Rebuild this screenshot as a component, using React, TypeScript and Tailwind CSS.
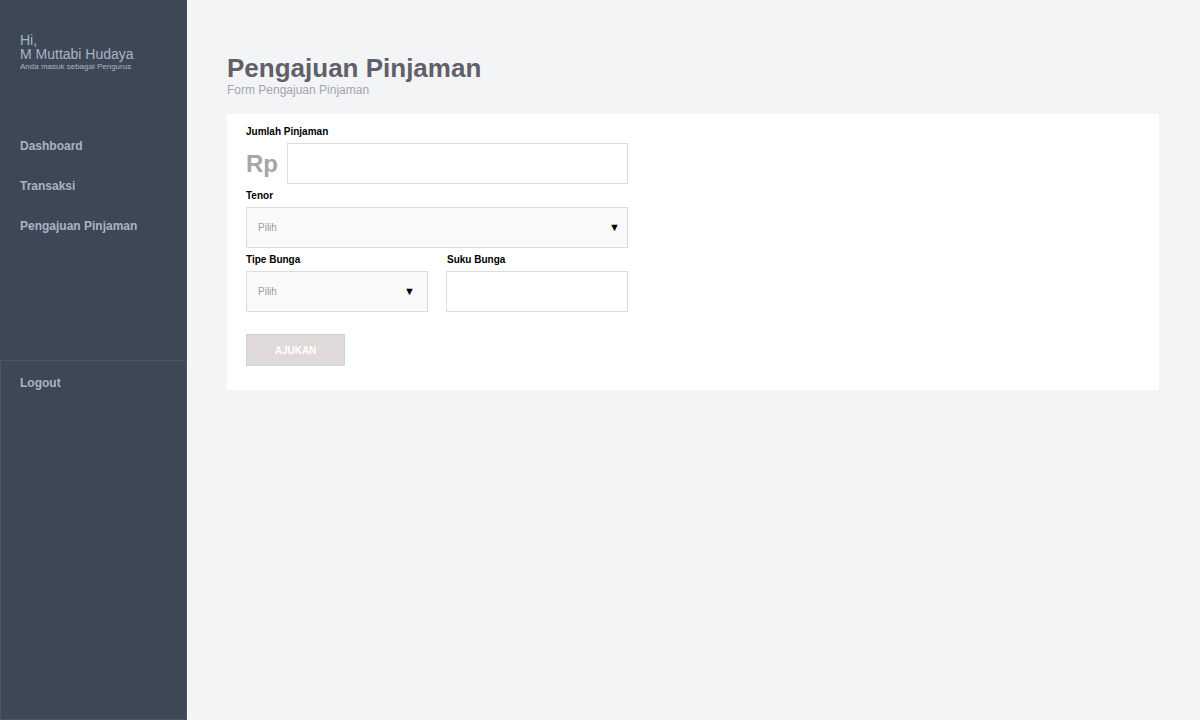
const font = { fontFamily: '"Liberation Sans", Arial, sans-serif' };

const NavItem = ({ label, inset = false }: { label: string; inset?: boolean }) => {
  return (
    <div
      className={`h-10 flex items-center text-[12px] font-bold text-[#a9b4c3] ${
        inset ? "px-[19px]" : "px-5"
      }`}
    >
      {label}
    </div>
  );
};

const Sidebar = () => {
  return (
    <aside className="w-[187px] shrink-0 bg-[#3d4856] flex flex-col min-h-screen">
      <div className="h-[360px] flex flex-col">
        <div className="pt-[33px] px-5 text-[#a9b4c3]">
          <div className="text-[14px] leading-[14px]">Hi,</div>
          <div className="text-[14px] leading-[14px]">M Muttabi Hudaya</div>
          <div className="text-[8px] leading-[10px] mt-[1px]">Anda masuk sebagai Pengurus</div>
        </div>
        <nav className="mt-[54px] flex flex-col">
          <NavItem label="Dashboard" />
          <NavItem label="Transaksi" />
          <NavItem label="Pengajuan Pinjaman" />
        </nav>
      </div>
      <div className="flex-1 border border-[#4b5664] pt-[2px]">
        <NavItem label="Logout" inset />
      </div>
    </aside>
  );
};

const Label = ({ text }: { text: string }) => {
  return <div className="text-[10px] font-bold text-black leading-[12px] mb-[5px]">{text}</div>;
};

const Select = ({ small = false }: { small?: boolean }) => {
  return (
    <div
      className={`h-[41px] w-full border border-[#dcdcdc] bg-[#fafafa] flex items-center justify-between pl-[11px] ${
        small ? "pr-[12px]" : "pr-[7px]"
      }`}
    >
      <span className="text-[10px] text-[#9a9a9a]">Pilih</span>
      <span className="text-[11px] text-black">▼</span>
    </div>
  );
};

export default function App() {
  return (
    <div className="flex min-h-screen bg-[#f3f4f6]" style={font}>
      <Sidebar />
      <main className="flex-1 pl-10 pr-[41px] pt-[53px]">
        <h1 className="text-[26px] font-bold text-[#5f6069] leading-[30px]">Pengajuan Pinjaman</h1>
        <p className="text-[12px] text-[#a3a4ac] leading-[14px]">Form Pengajuan Pinjaman</p>
        <div className="bg-white mt-[17px] pt-[12px] pb-[24px] px-[19px]">
          <div className="w-[382px] flex flex-col">
            <Label text="Jumlah Pinjaman" />
            <div className="flex items-center gap-[9px]">
              <span className="text-[24px] font-bold text-[#a6a6a6] leading-none">Rp</span>
              <div className="flex-1 h-[41px] border border-[#dcdcdc] bg-white" />
            </div>
            <div className="mt-[6px]">
              <Label text="Tenor" />
              <Select />
            </div>
            <div className="mt-[6px] grid grid-cols-2 gap-[18px]">
              <div>
                <Label text="Tipe Bunga" />
                <Select small />
              </div>
              <div>
                <div className="pl-[1px]">
                  <Label text="Suku Bunga" />
                </div>
                <div className="h-[41px] border border-[#dcdcdc] bg-white" />
              </div>
            </div>
            <button className="mt-[22px] w-[99px] h-[32px] bg-[#e0d9d9] border border-[#c5d5e5] text-white text-[10px] font-bold">
              AJUKAN
            </button>
          </div>
        </div>
      </main>
    </div>
  );
}
